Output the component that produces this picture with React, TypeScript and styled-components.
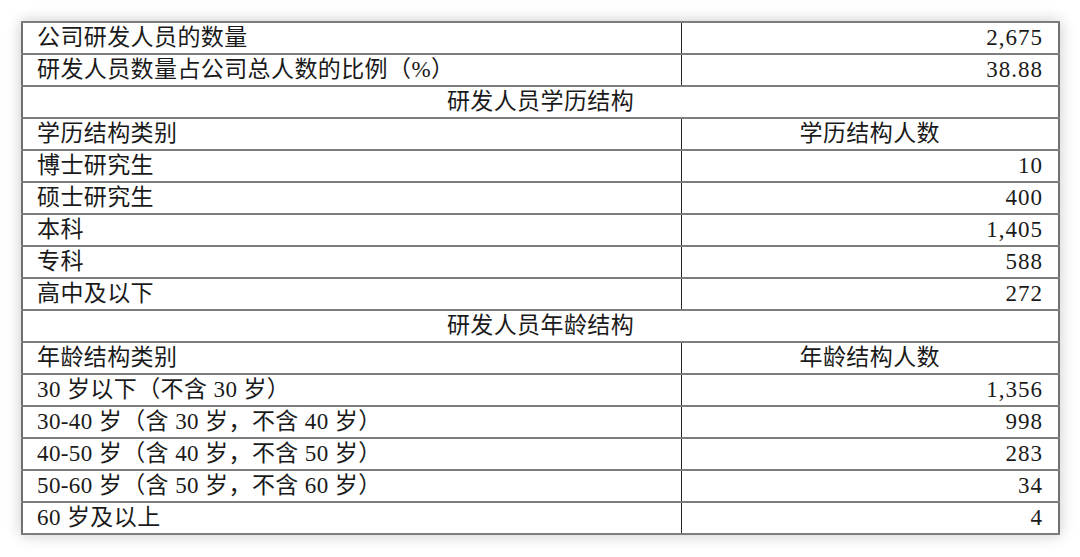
import {createGlobalStyle} from "styled-components";
import styled from "styled-components";

/**
 * Page reset: white page, no default margin.
 */
const GlobalStyle = createGlobalStyle`
    html, body {
        margin: 0;
        padding: 0;
        background: #ffffff;
    }
`;

type Row =
    | {kind: 'data'; label: string; value: string}
    | {kind: 'section'; title: string}
    | {kind: 'head'; label: string; value: string};

const rows: Row[] = [
    {kind: 'data', label: '公司研发人员的数量', value: '2,675'},
    {kind: 'data', label: '研发人员数量占公司总人数的比例（%）', value: '38.88'},
    {kind: 'section', title: '研发人员学历结构'},
    {kind: 'head', label: '学历结构类别', value: '学历结构人数'},
    {kind: 'data', label: '博士研究生', value: '10'},
    {kind: 'data', label: '硕士研究生', value: '400'},
    {kind: 'data', label: '本科', value: '1,405'},
    {kind: 'data', label: '专科', value: '588'},
    {kind: 'data', label: '高中及以下', value: '272'},
    {kind: 'section', title: '研发人员年龄结构'},
    {kind: 'head', label: '年龄结构类别', value: '年龄结构人数'},
    {kind: 'data', label: '30 岁以下（不含 30 岁）', value: '1,356'},
    {kind: 'data', label: '30-40 岁（含 30 岁，不含 40 岁）', value: '998'},
    {kind: 'data', label: '40-50 岁（含 40 岁，不含 50 岁）', value: '283'},
    {kind: 'data', label: '50-60 岁（含 50 岁，不含 60 岁）', value: '34'},
    {kind: 'data', label: '60 岁及以上', value: '4'},
];

/**
 * Renders the R&D staff table.
 */
const App = () => {
    return <>
        <GlobalStyle />
        <Page>
            <Table>
                <colgroup>
                    <col style={{width: 659}} />
                    <col />
                </colgroup>
                <tbody>
                {rows.map((row, i) => {
                    if (row.kind === 'section') {
                        return <Tr key={i}><SectionCell colSpan={2}>{row.title}</SectionCell></Tr>;
                    }
                    return <Tr key={i}>
                        <LabelCell>{row.label}</LabelCell>
                        {row.kind === 'head'
                            ? <HeadCell>{row.value}</HeadCell>
                            : <ValueCell>{row.value}</ValueCell>}
                    </Tr>;
                })}
                </tbody>
            </Table>
        </Page>
    </>;
};

export default App;

/**
 * Outer page holding the table with a white margin.
 */
const Page = styled.div`
    padding: 21px 20px 24px 21px;
`;

/**
 * The table itself, with a soft shadow around it.
 */
const Table = styled.table`
    width: 1039px;
    border-collapse: collapse;
    table-layout: fixed;
    border: 2px solid #707070;
    box-shadow: 0 0 14px rgba(0, 0, 0, 0.22);
    font-family: "Liberation Serif", "Noto Sans CJK SC", serif;
    color: #1a1a1a;
    font-size: 23px;
`;

/**
 * A single table row.
 */
const Tr = styled.tr`
    height: 32px;
`;

/**
 * Base cell: horizontal rules between rows.
 */
const Cell = styled.td`
    padding: 0 14px;
    height: 30px;
    line-height: 30px;
    border-top: 2px solid #7d7d7d;
    border-bottom: 2px solid #7d7d7d;
    white-space: nowrap;
    overflow: hidden;
`;

/**
 * Left column label, mixed CJK and digits.
 */
const LabelCell = styled(Cell)`
    text-align: left;
    border-right: 1px solid #222;
    letter-spacing: 0.4px;
    font-family: "Liberation Serif", "Noto Sans CJK SC", serif;
`;

/**
 * Right column number.
 */
const ValueCell = styled(Cell)`
    text-align: right;
    padding-right: 15px;
    letter-spacing: 1px;
`;

/**
 * Right column header, centered.
 */
const HeadCell = styled(Cell)`
    text-align: center;
    letter-spacing: 0.4px;
`;

/**
 * Full-width section title.
 */
const SectionCell = styled(Cell)`
    text-align: center;
    letter-spacing: 0.4px;
`;
